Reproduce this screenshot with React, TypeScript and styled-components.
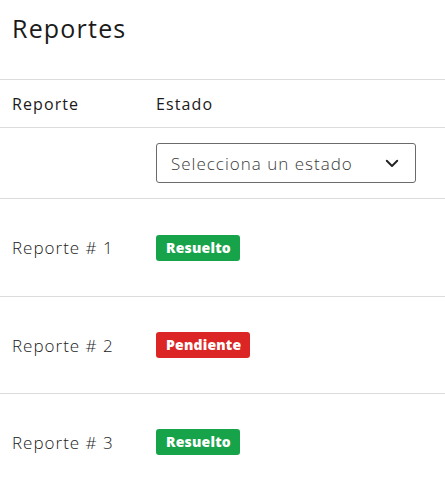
import React from 'react';
import styled, { createGlobalStyle } from 'styled-components';

type Status = 'Resuelto' | 'Pendiente';

interface Report {
  id: number;
  status: Status;
}

const reports: Report[] = [
  { id: 1, status: 'Resuelto' },
  { id: 2, status: 'Pendiente' },
  { id: 3, status: 'Resuelto' },
];

const GlobalStyle = createGlobalStyle`
  body {
    margin: 0;
    background: #ffffff;
    font-family: "Open Sans", "Liberation Sans", sans-serif;
    color: #222222;
  }
`;

const Page = styled.div`
  width: 445px;
`;

const Title = styled.h1`
  margin: 0;
  padding: 11px 12px 0;
  height: 79px;
  box-sizing: border-box;
  font-size: 25px;
  font-weight: 400;
  letter-spacing: 1.2px;
  color: #1a1a1a;
`;

const Row = styled.div<{ $height: number }>`
  display: grid;
  grid-template-columns: 144px 1fr;
  align-items: center;
  height: ${(p) => p.$height}px;
  padding-left: 12px;
  border-top: 1px solid #dcdcdc;
  box-sizing: border-box;
`;

const HeadCell = styled.div`
  font-size: 16px;
  font-weight: 500;
  letter-spacing: 1.1px;
  color: #1a1a1a;
`;

const Cell = styled.div`
  font-size: 17px;
  font-weight: 300;
  letter-spacing: 1px;
  color: #1a1a1a;
`;

const Select = styled.div`
  display: flex;
  align-items: center;
  justify-content: space-between;
  width: 260px;
  height: 40px;
  box-sizing: border-box;
  padding: 0 14px 0 14px;
  border: 1px solid #6b6b6b;
  border-radius: 3px;
  font-size: 17px;
  font-weight: 300;
  letter-spacing: 1px;
  color: #3a3a3a;
`;

const Badge = styled.span<{ $status: Status }>`
  display: inline-block;
  padding: 3px 9px 3px 10px;
  border-radius: 3px;
  font-size: 14px;
  font-weight: 800;
  letter-spacing: 0.2px;
  line-height: 20px;
  color: #ffffff;
  background: ${(p) => (p.$status === 'Resuelto' ? '#16a34a' : '#dc2626')};
`;

const Chevron = () => (
  <svg width="18" height="18" viewBox="0 0 24 24" fill="none" stroke="#222" strokeWidth="2.5" strokeLinecap="round" strokeLinejoin="round">
    <path d="M5 9l7 7 7-7" />
  </svg>
);

export default function App() {
  return (
    <Page>
      <GlobalStyle />
      <Title>Reportes</Title>
      <Row $height={48}>
        <HeadCell>Reporte</HeadCell>
        <HeadCell>Estado</HeadCell>
      </Row>
      <Row $height={71}>
        <div />
        <Select>
          <span>Selecciona un estado</span>
          <Chevron />
        </Select>
      </Row>
      {reports.map((r, i) => (
        <Row key={r.id} $height={i === 0 ? 98 : 97}>
          <Cell>Reporte # {r.id}</Cell>
          <div>
            <Badge $status={r.status}>{r.status}</Badge>
          </div>
        </Row>
      ))}
    </Page>
  );
}
